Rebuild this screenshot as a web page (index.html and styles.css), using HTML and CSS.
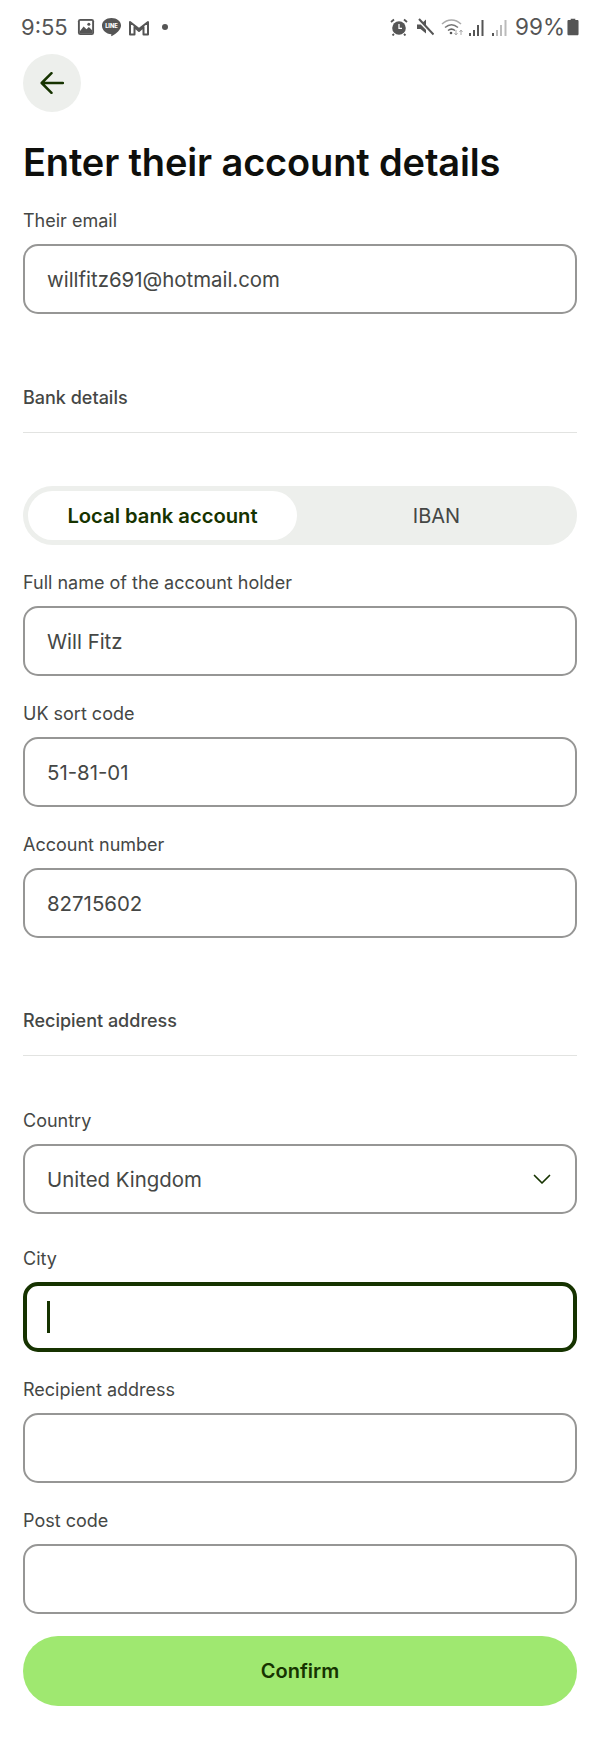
FILE: index.html
```html
<!DOCTYPE html>
<html lang="en">
<head>
<meta charset="UTF-8">
<meta name="viewport" content="width=device-width, initial-scale=1.0">
<title>Enter their account details</title>
<link rel="stylesheet" href="styles.css">
</head>
<body>

<div class="status-bar">
  <div class="status-left">
    <span class="status-time">9:55</span>
    <svg class="notif-icon" width="18" height="18" viewBox="0 0 19 19"><rect x="1" y="1" width="17" height="17" rx="2.5" fill="#555"/><rect x="3" y="3" width="13" height="13" fill="#fff"/><path d="M3 14l4-5 3 3 2.5-2.5L16 13v3H3z" fill="#555"/><circle cx="12.5" cy="6.5" r="1.6" fill="#555"/></svg>
    <svg class="notif-icon" width="21" height="20" viewBox="0 0 22 21"><path d="M11 1c5.600 0 10 3.400 10 8 0 4.500-5 8.500-9.500 11-.7.400-.9-.1-.8-.8l.2-1.200C5.200 18 1 14 1 9c0-4.600 4.400-8 10-8z" fill="#555"/><text x="11" y="11.500" class="line-text">LINE</text></svg>
    <svg class="notif-icon" width="22" height="17" viewBox="0 0 22 17"><path d="M2 15.500V3l9 7 9-7v12.500h-4.500V8L11 12 6.500 8v7.500z" fill="none" stroke="#555" stroke-width="2" stroke-linejoin="round"/></svg>
    <span class="notif-dot"></span>
  </div>
  <div class="status-right">
    <svg width="18" height="18" viewBox="0 0 18 18"><circle cx="9" cy="10" r="6.800" fill="#555"/><path d="M9 6v4.300h3" fill="none" stroke="#fff" stroke-width="1.300"/><path d="M1 4l3-2.500M17 4l-3-2.500M4 16l-1.500 1.500M14 16l1.500 1.500" stroke="#555" stroke-width="1.800"/></svg>
    <svg class="mute-icon" width="18" height="18" viewBox="0 0 18 18"><path d="M1 6.500h3.500L10 1.500v14l-5.500-4.500H1z" fill="#555"/><path d="M2 1.500l15 15.500" stroke="#fff" stroke-width="3"/><path d="M3 1l14.500 15.500" stroke="#555" stroke-width="2"/></svg>
    <svg class="wifi-icon" width="23" height="18" viewBox="0 0 23 18"><path d="M1 6c5.500-5.500 13.500-5.500 19 0" fill="none" stroke="#aaa" stroke-width="1.500"/><path d="M4 9.500c4-3.500 9-3.500 13 0" fill="none" stroke="#777" stroke-width="1.500"/><path d="M7 12.500c2.300-1.800 4.700-1.800 7 0" fill="none" stroke="#666" stroke-width="1.500"/><circle cx="10" cy="15" r="1.300" fill="#555"/><path d="M15 12v5M13.500 15l1.500 2 1.500-2" fill="none" stroke="#aaa" stroke-width="1"/><path d="M20 17v-5M18.500 14l1.500-2 1.500 2" fill="none" stroke="#aaa" stroke-width="1"/></svg>
    <svg class="signal-icon" width="16" height="17" viewBox="0 0 16 17"><path d="M1 17v-3M5 17v-6M9 17V6M13.500 17V1" stroke="#555" stroke-width="2"/></svg>
    <svg class="signal-icon signal-gap" width="16" height="17" viewBox="0 0 16 17"><path d="M1 17v-3" stroke="#555" stroke-width="2"/><path d="M5 17v-6M9 17V6M13.500 17V1" stroke="#bbb" stroke-width="2"/></svg>
    <span class="status-battery">99%</span>
    <svg width="12" height="18" viewBox="0 0 13 18"><path d="M4 0h5v1.500h2.200c.9 0 1.300.5 1.300 1.300V16.500c0 .9-.5 1.500-1.300 1.500H1.800C1 18 .5 17.400 .5 16.500V2.800c0-.8.4-1.300 1.300-1.300H4z" fill="#555"/></svg>
  </div>
</div>

<div class="page">
  <button class="back-btn" type="button" aria-label="Back">
    <svg width="24" height="22" viewBox="0 0 24 22"><path d="M23 11H2M11.500 1.200L1.700 11l9.800 9.800" fill="none" stroke="#163300" stroke-width="2.500" stroke-linecap="round" stroke-linejoin="round"/></svg>
  </button>

  <h1 class="page-title">Enter their account details</h1>

  <div class="field field-email">
    <label class="field-label">Their email</label>
    <div class="input-box">willfitz691@hotmail.com</div>
  </div>

  <div class="section-head section-bank">Bank details</div>

  <div class="tabs">
    <div class="tab tab-active">Local bank account</div>
    <div class="tab tab-other">IBAN</div>
  </div>

  <div class="field">
    <label class="field-label">Full name of the account holder</label>
    <div class="input-box">Will Fitz</div>
  </div>
  <div class="field">
    <label class="field-label">UK sort code</label>
    <div class="input-box">51-81-01</div>
  </div>
  <div class="field">
    <label class="field-label">Account number</label>
    <div class="input-box">82715602</div>
  </div>

  <div class="section-head section-address">Recipient address</div>

  <div class="field field-country">
    <label class="field-label">Country</label>
    <div class="input-box select-box">
      <span>United Kingdom</span>
      <svg width="18" height="11" viewBox="0 0 18 11"><path d="M1.500 1.500L9 9l7.500-7.500" fill="none" stroke="#163300" stroke-width="1.700" stroke-linecap="round" stroke-linejoin="round"/></svg>
    </div>
  </div>
  <div class="field field-city">
    <label class="field-label">City</label>
    <div class="input-box input-focus"><span class="caret"></span></div>
  </div>
  <div class="field">
    <label class="field-label">Recipient address</label>
    <div class="input-box"></div>
  </div>
  <div class="field">
    <label class="field-label">Post code</label>
    <div class="input-box"></div>
  </div>

  <button class="confirm-btn" type="button">Confirm</button>
</div>

</body>
</html>
```

FILE: styles.css
```css
* {
  box-sizing: border-box;
}

body {
  font-family: Inter, "Liberation Sans", sans-serif;
  background-color: #fff;
  margin: 0;
  padding: 0;
  color: #454745;
}

.status-bar {
  display: flex;
  justify-content: space-between;
  align-items: center;
  height: 54px;
  padding: 0 21px;
  color: #555;
}

.status-left,
.status-right {
  display: flex;
  align-items: center;
}

.status-time,
.status-battery {
  font-size: 22px;
  line-height: 26px;
}

.status-time {
  margin-right: 9px;
}

.notif-icon {
  margin-right: 6px;
}

.line-text {
  font-size: 6px;
  font-weight: 800;
  fill: #fff;
  text-anchor: middle;
}

.notif-dot {
  width: 6px;
  height: 6px;
  border-radius: 50%;
  background-color: #555;
  margin-left: 6px;
}

.mute-icon {
  margin-left: 8px;
}

.wifi-icon {
  margin-left: 7px;
}

.signal-icon {
  margin-left: 5px;
}

.signal-gap {
  margin-left: 7px;
}

.status-battery {
  font-size: 22.5px;
  margin-left: 7px;
  margin-right: 2px;
}

.page {
  padding: 0 23px;
}

.back-btn {
  display: flex;
  align-items: center;
  justify-content: center;
  width: 58px;
  height: 58px;
  padding: 0;
  border: none;
  border-radius: 50%;
  background-color: #edefec;
}

.page-title {
  margin: 25px 0 0;
  font-size: 38px;
  line-height: 50px;
  font-weight: 600;
  letter-spacing: -0.15px;
  color: #0e0f0c;
}

.field {
  margin-top: 26px;
}

.field-email {
  margin-top: 22px;
}

.field-country {
  margin-top: 53px;
}

.field-city {
  margin-top: 33px;
}

.field-label {
  display: block;
  font-size: 18px;
  line-height: 24px;
  margin-bottom: 11px;
  color: #454745;
}

.input-box {
  display: flex;
  align-items: center;
  height: 70px;
  padding: 0 22px;
  border: 2px solid #969695;
  border-radius: 15px;
  font-size: 20.4px;
  color: #454745;
}

.select-box {
  justify-content: space-between;
  padding-right: 24px;
}

.input-focus {
  border: 4px solid #163300;
  padding: 0 20px;
}

.caret {
  width: 3px;
  height: 32px;
  background-color: #163300;
}

.section-head {
  font-size: 18px;
  font-weight: 500;
  line-height: 24px;
  padding-bottom: 22px;
  border-bottom: 1px solid #e2e3e1;
}

.section-bank {
  margin-top: 72px;
}

.section-address {
  margin-top: 71px;
}

.tabs {
  display: flex;
  height: 59px;
  margin-top: 53px;
  padding: 5px;
  border-radius: 30px;
  background-color: #edefec;
}

.tab {
  flex: 1;
  display: flex;
  align-items: center;
  justify-content: center;
  border-radius: 25px;
  font-size: 20px;
}

.tab-active {
  flex: 0 0 269px;
  background-color: #fff;
  font-size: 20.2px;
  font-weight: 600;
  color: #163300;
}

.tab-other {
  padding-left: 4px;
}

.confirm-btn {
  display: block;
  width: 100%;
  height: 70px;
  margin-top: 22px;
  border: none;
  border-radius: 35px;
  background-color: #9fe870;
  font-family: inherit;
  font-size: 20px;
  font-weight: 600;
  color: #163300;
}
```
